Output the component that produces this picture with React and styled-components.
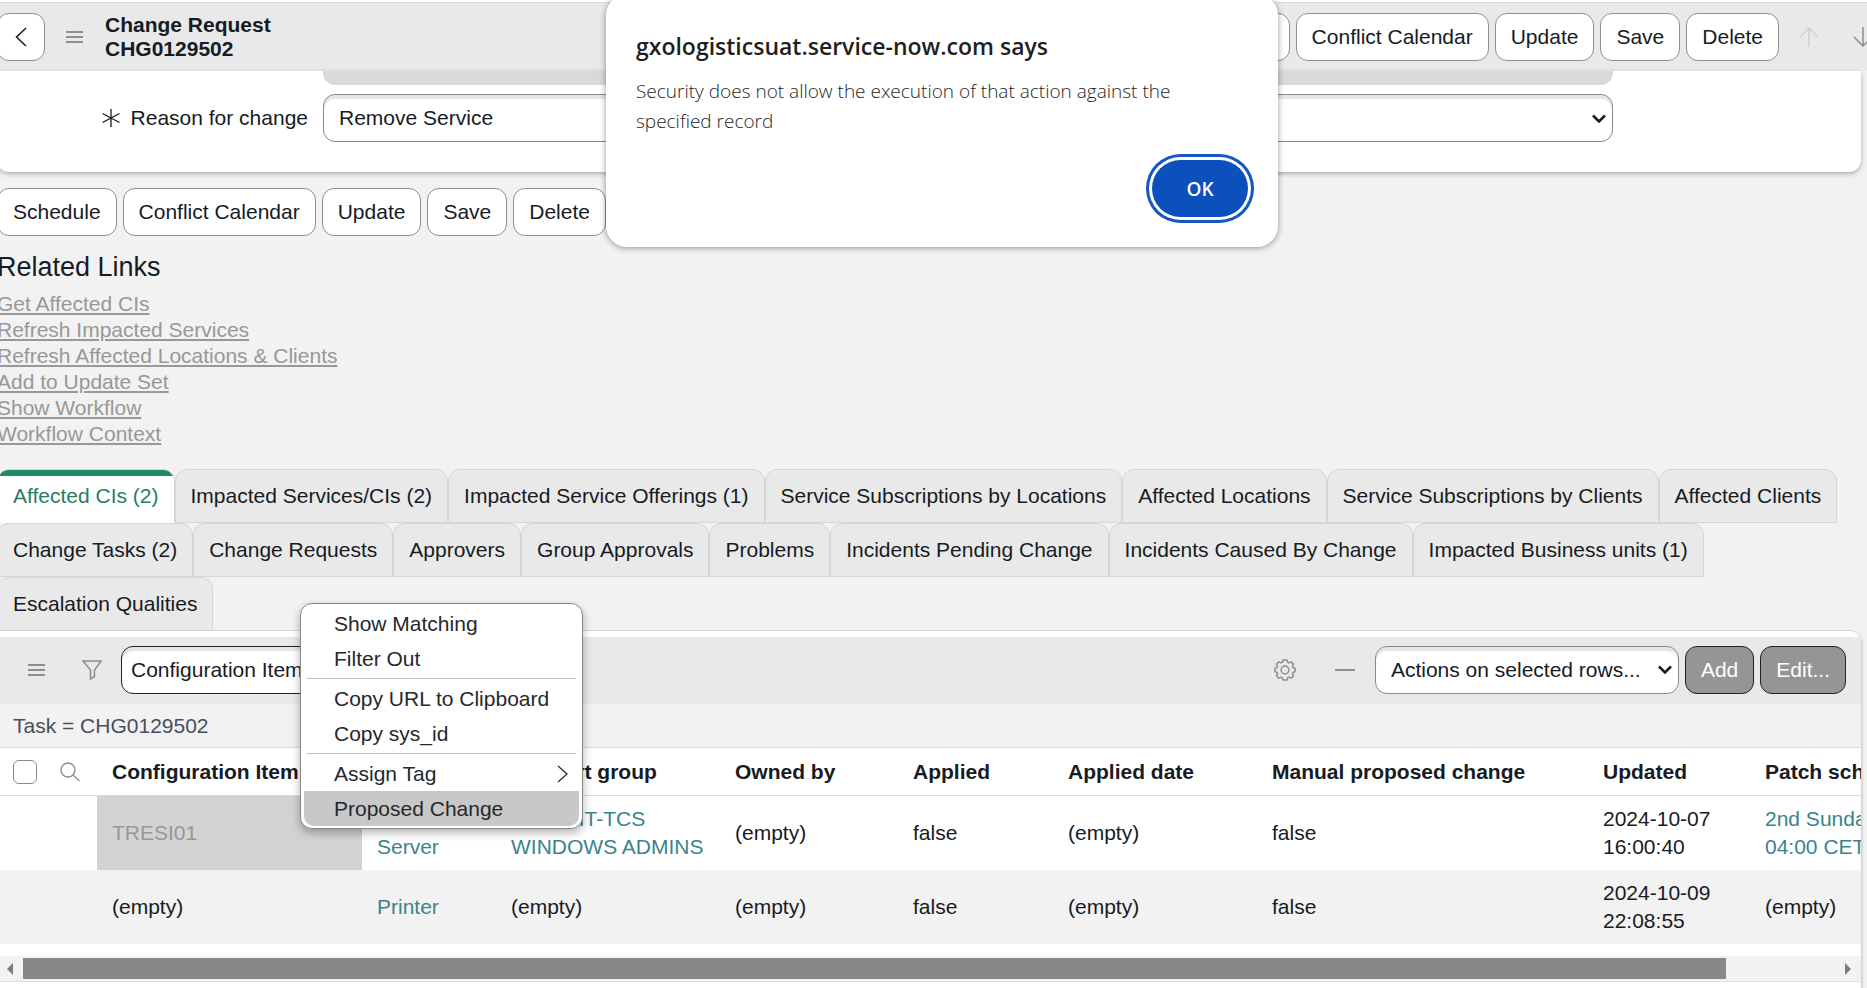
import React from "react";
import styled, { createGlobalStyle, css } from "styled-components";

const GlobalStyle = createGlobalStyle`
  *, *::before, *::after { box-sizing: border-box; }
  html { overflow: hidden; }
  body {
    margin: 0;
    background: #f2f2f2;
    color: #161b24;
    font: 21px/28px "Liberation Sans", Arial, sans-serif;
    overflow: hidden;
  }
  button, select, input { font: inherit; color: inherit; }
`;

const Page = styled.div`
  position: relative;
  margin-left: -3px;
`;

/* ---------- header ---------- */
const Header = styled.header`
  border-top: 2px solid #fff;
  background: #fff;
`;

const HeaderBar = styled.div`
  display: flex;
  align-items: center;
  height: 69px;
  padding-bottom: 10px;
  padding-top: 10px;
  margin-right: -20px;
  border-top: 1px solid #dcdcdc;
  background: #e9e9e9;
`;

const Title = styled.h1`
  margin: 0;
  font-size: 21px;
  line-height: 24px;
  font-weight: bold;
`;

const Actions = styled.div`
  display: flex;
  gap: 6px;
  margin-left: ${(p) => (p.$end ? "auto" : "0")};
`;

const Button = styled.button`
  height: 48px;
  padding: 0 15px;
  border: 1px solid #8c8f94;
  border-radius: 12px;
  background: #fff;
  white-space: nowrap;
  ${(p) =>
    p.$square &&
    css`
      width: 48px;
      padding: 0;
      display: grid;
      place-items: center;
    `}
  ${(p) =>
    p.$dark &&
    css`
      background: #959595;
      border-color: #222;
      color: #fff;
    `}
`;

const IconButton = styled.button`
  display: grid;
  place-items: center;
  width: ${(p) => p.$w || 48}px;
  height: 48px;
  padding: 0;
  border: 0;
  background: none;
  color: ${(p) => (p.$faint ? "#d0d0d0" : "#8e8e8e")};
`;

/* ---------- form ---------- */
const Main = styled.main`
  padding-right: 6px;
`;

const FormCard = styled.section`
  display: grid;
  grid-template-columns: 326px minmax(0, 1fr) 248px;
  row-gap: 9px;
  padding-bottom: 30px;
  border-radius: 0 0 12px 12px;
  background: #fff;
  box-shadow: 0 2px 5px rgba(0, 0, 0, 0.28);
`;

const ReadOnlyEdge = styled.div`
  grid-column: 2;
  height: 14px;
  border-radius: 0 0 12px 12px;
  background: #d9d9d9;
`;

const FieldLabel = styled.label`
  grid-column: 1;
  display: flex;
  align-items: center;
  justify-content: flex-end;
  gap: 11px;
  padding-right: 15px;
`;

const SelectBox = styled.div`
  display: grid;
  align-items: center;
  width: ${(p) => (p.$w ? `${p.$w}px` : "auto")};
  & > * { grid-area: 1 / 1; }
  & > svg { justify-self: end; margin-right: 7px; pointer-events: none; }
`;

const Select = styled.select`
  appearance: none;
  width: 100%;
  height: 48px;
  padding: 0 36px 0 ${(p) => (p.$tight ? 9 : 15)}px;
  border: 1px solid ${(p) => (p.$tight ? "#22222c" : "#868893")};
  border-radius: 12px;
  background: #fff;
  box-shadow: inset 0 4px 1px #e6e6e8;
`;

const ButtonRow = styled.div`
  display: flex;
  gap: 6px;
  margin-top: 16px;
`;

/* ---------- related links ---------- */
const LinksTitle = styled.h2`
  margin: 15px 0 8px;
  font-size: 27px;
  line-height: 32px;
  font-weight: normal;
`;

const LinkList = styled.ul`
  margin: 0;
  padding: 0;
  list-style: none;
  line-height: 26px;
  & a {
    color: #989898;
    text-decoration: underline;
    text-decoration-thickness: 2px;
    text-underline-offset: 2px;
  }
`;

/* ---------- tabs ---------- */
const Tabs = styled.div`
  display: flex;
  flex-wrap: wrap;
  margin-top: 22px;
`;

const Tab = styled.button`
  height: 54px;
  padding: 0 15px;
  border: 1px solid #d3d5d8;
  border-radius: 12px 12px 0 0;
  background: #e9e9e9;
  white-space: nowrap;
  ${(p) =>
    p.$active &&
    css`
      border-bottom-color: #fff;
      background: linear-gradient(#1f8a6b 6px, #fff 6px);
      color: #2a7c62;
    `}
`;

/* ---------- list ---------- */
const ListCard = styled.section`
  padding-top: 6px;
  padding-bottom: 12px;
  border-top: 1px solid #d6d8da;
  border-radius: 0 12px 0 0;
  background: #fff;
  box-shadow: 1px 2px 3px rgba(0, 0, 0, 0.2);
  margin-top: -1px;
`;

const Toolbar = styled.div`
  display: flex;
  align-items: center;
  height: 67px;
  padding: 0 15px 2px;
  background: #e9e9e9;
`;

const Spacer = styled.div`
  flex: 1;
`;

const Breadcrumb = styled.div`
  height: 43px;
  padding: 8px 16px 0;
  background: #f2f2f2;
  color: #46505c;
`;

const TableScroll = styled.div`
  overflow: hidden;
`;

const Table = styled.table`
  table-layout: fixed;
  width: 1930px;
  border-collapse: collapse;
  & th, & td {
    padding: 9px 15px;
    text-align: left;
    vertical-align: middle;
  }
  & th {
    height: 48px;
    border-top: 1px solid #dcdcdc;
    border-bottom: 1px solid #dcdcdc;
    white-space: nowrap;
    line-height: 28px;
  }
  & td { height: 74px; }
  & a { color: #3a848b; text-decoration: none; }
`;

const Row = styled.tr`
  background: ${(p) => (p.$even ? "#f2f2f2" : "#fff")};
`;

const PickedCell = styled.td`
  background: #d3d3d3;
  color: #979797;
`;

const HeadTools = styled.div`
  display: flex;
  align-items: center;
  gap: 23px;
`;

const CheckBox = styled.input`
  appearance: none;
  width: 24px;
  height: 24px;
  margin: 0 0 0 1px;
  border: 1px solid #85888c;
  border-radius: 6px;
  background: #fff;
`;

const SearchToggle = styled.button`
  display: grid;
  place-items: center;
  padding: 0;
  border: 0;
  background: none;
  color: #8e8e8e;
`;

const ScrollBar = styled.div`
  display: flex;
  align-items: center;
  height: 26px;
  margin-top: 12px;
  border-bottom: 1px solid #dfe0e2;
  background: #f2f2f2;
`;

const ScrollArrow = styled.button`
  display: grid;
  place-items: center;
  width: 26px;
  height: 20px;
  padding: 0;
  border: 0;
  background: none;
  color: #7c7c7c;
`;

const ScrollTrack = styled.div`
  flex: 1;
  height: 21px;
`;

const ScrollThumb = styled.div`
  width: 94%;
  height: 100%;
  background: #888;
`;

/* ---------- context menu ---------- */
const Menu = styled.div`
  position: absolute;
  top: 603px;
  left: 303px;
  width: 283px;
  padding: 2px 3px;
  border: 1px solid #85888c;
  border-radius: 12px;
  background: #fff;
  box-shadow: 0 4px 10px rgba(0, 0, 0, 0.3);
`;

const MenuItem = styled.button`
  display: flex;
  align-items: center;
  justify-content: space-between;
  width: 100%;
  height: 35px;
  padding: 0 11px 0 30px;
  border: 0;
  border-radius: ${(p) => (p.$active ? "0 0 10px 10px" : "0")};
  background: ${(p) => (p.$active ? "#c8c8c8" : "none")};
  color: #25282e;
`;

const MenuRule = styled.hr`
  height: 1px;
  margin: 2px 3px;
  border: 0;
  background: #bcbfc2;
`;

/* ---------- dialog ---------- */
const Dialog = styled.div`
  position: absolute;
  top: -6px;
  left: 20px;
  right: 0;
  width: 672px;
  margin: 0 auto;
  padding: 36px 30px 30px;
  border-radius: 21px;
  background: #fff;
  box-shadow: 0 1px 6px rgba(0, 0, 0, 0.4);
  font-family: "Open Sans", "Noto Sans", sans-serif;
  color: #1f1f1f;
`;

const DialogTitle = styled.h2`
  margin: 0;
  font-size: 23px;
  line-height: 32px;
  font-weight: 560;
`;

const DialogText = styled.p`
  margin: 14px 0 24px;
  font-size: 19px;
  line-height: 30px;
  font-weight: 340;
`;

const DialogFooter = styled.div`
  display: flex;
  justify-content: flex-end;
`;

const OkButton = styled.button`
  width: 96px;
  height: 57px;
  border: 0;
  border-radius: 29px;
  background: #0b50bd;
  box-shadow: 0 0 0 3px #fff, 0 0 0 6px #1558bd;
  color: #fff;
  font-size: 19px;
  font-weight: 600;
`;

/* ---------- icons ---------- */
const Svg = ({ w, h, sw = 2, children }) => (
  <svg width={w} height={h} viewBox={`0 0 ${w} ${h}`} fill="none" stroke="currentColor" strokeWidth={sw} aria-hidden="true">
    {children}
  </svg>
);
const BackIcon = () => <Svg w={12} h={20} sw={1.5}><path d="M11 1 1.500 10 11 19" /></Svg>;
const BarsIcon = () => <Svg w={18} h={12} sw={2}><path d="M0 1h17M0 6h17M0 11h17" /></Svg>;
const UpIcon = () => <Svg w={20} h={20} sw={1.500}><path d="M10 20V1M1 10l9-9 9 9" /></Svg>;
const DownIcon = () => <Svg w={20} h={20} sw={1.500}><path d="M10 0v19M1 10l9 9 9-9" /></Svg>;
const ChevronIcon = () => <Svg w={14} h={9} sw={2.500}><path d="M1 1.500 7 7.500 13 1.500" /></Svg>;
const StarIcon = () => <Svg w={18} h={18} sw={1.300}><path d="M9 0v18M0.500 4.500l17 9M0.500 13.500l17-9" /></Svg>;
const FilterIcon = () => <Svg w={20} h={20} sw={1.500}><path d="M1 1h18l-6.500 9v6.500L8.500 19V10z" /></Svg>;
const DashIcon = () => <Svg w={20} h={2} sw={2}><path d="M0 1h20" /></Svg>;
const SearchIcon = () => <Svg w={20} h={20} sw={1.400}><circle cx="8" cy="8" r="7" /><path d="m13 13 6.500 6" /></Svg>;
const NextIcon = () => <Svg w={11} h={18} sw={1.300}><path d="m1 1 9 8-9 8" /></Svg>;
const GearIcon = () => (
  <Svg w={22} h={22} sw={1.500}>
    <path strokeLinejoin="round" d="M9 1h4l.7 2.300 1.300.6L17.200 2.800 19.500 5.300 18.400 7.300 18.900 8.600 21 9.200V12.800L18.900 13.400 18.400 14.700 19.500 16.700 17.200 19.200 15 18.100 13.700 18.700 13 21H9L8.300 18.700 7 18.100 4.800 19.200 2.500 16.700 3.600 14.700 3.100 13.400 1 12.800V9.200L3.100 8.600 3.600 7.300 2.500 5.300 4.800 2.800 7 3.900 8.300 3.300z" />
    <ellipse cx="11" cy="11" rx="3.800" ry="4" />
  </Svg>
);
const Triangle = ({ right }) => (
  <svg width="6" height="12" viewBox="0 0 6 12" fill="currentColor" aria-hidden="true">
    <path d={right ? "M0 0 6 6 0 12z" : "M6 0 0 6 6 12z"} />
  </svg>
);

/* ---------- data ---------- */
const formActions = ["Schedule", "Conflict Calendar", "Update", "Save", "Delete"];
const links = [
  "Get Affected CIs",
  "Refresh Impacted Services",
  "Refresh Affected Locations & Clients",
  "Add to Update Set",
  "Show Workflow",
  "Workflow Context",
];
const tabs = [
  "Affected CIs (2)",
  "Impacted Services/CIs (2)",
  "Impacted Service Offerings (1)",
  "Service Subscriptions by Locations",
  "Affected Locations",
  "Service Subscriptions by Clients",
  "Affected Clients",
  "Change Tasks (2)",
  "Change Requests",
  "Approvers",
  "Group Approvals",
  "Problems",
  "Incidents Pending Change",
  "Incidents Caused By Change",
  "Impacted Business units (1)",
  "Escalation Qualities",
];
const columns = [
  ["Configuration Item", 265],
  ["Class", 134],
  ["Support group", 224],
  ["Owned by", 178],
  ["Applied", 155],
  ["Applied date", 204],
  ["Manual proposed change", 331],
  ["Updated", 162],
  ["Patch schedule", 177],
];

export default function App() {
  return (
    <>
      <GlobalStyle />
      <Page>
        <Header>
          <HeaderBar>
            <Button $square aria-label="Back"><BackIcon /></Button>
            <IconButton $w={60} aria-label="Additional actions"><BarsIcon /></IconButton>
            <Title>Change Request<br />CHG0129502</Title>
            <Actions $end>
              {formActions.map((a) => <Button key={a}>{a}</Button>)}
              <IconButton $faint aria-label="Previous record"><UpIcon /></IconButton>
              <IconButton aria-label="Next record"><DownIcon /></IconButton>
            </Actions>
          </HeaderBar>
        </Header>

        <Main>
          <FormCard>
            <ReadOnlyEdge />
            <FieldLabel htmlFor="reason"><StarIcon />Reason for change</FieldLabel>
            <SelectBox>
              <Select id="reason"><option>Remove Service</option></Select>
              <ChevronIcon />
            </SelectBox>
          </FormCard>

          <ButtonRow>
            {formActions.map((a) => <Button key={a}>{a}</Button>)}
          </ButtonRow>

          <LinksTitle>Related Links</LinksTitle>
          <LinkList>
            {links.map((l) => <li key={l}><a href="#related">{l}</a></li>)}
          </LinkList>

          <Tabs role="tablist">
            {tabs.map((t, i) => (
              <Tab key={t} role="tab" aria-selected={i === 0} $active={i === 0}>{t}</Tab>
            ))}
          </Tabs>

          <ListCard>
            <Toolbar>
              <IconButton $w={50} aria-label="List controls"><BarsIcon /></IconButton>
              <IconButton $w={59} aria-label="Filter"><FilterIcon /></IconButton>
              <SelectBox $w={230}>
                <Select $tight aria-label="Search column"><option>Configuration Item</option></Select>
                <ChevronIcon />
              </SelectBox>
              <Spacer />
              <IconButton $w={60} aria-label="Personalize list"><GearIcon /></IconButton>
              <IconButton $w={60} aria-label="Collapse list"><DashIcon /></IconButton>
              <Actions>
                <SelectBox $w={304}>
                  <Select aria-label="Actions"><option>Actions on selected rows...</option></Select>
                  <ChevronIcon />
                </SelectBox>
                <Button $dark>Add</Button>
                <Button $dark>Edit...</Button>
              </Actions>
            </Toolbar>
            <Breadcrumb>Task = CHG0129502</Breadcrumb>
            <TableScroll>
              <Table>
                <colgroup>
                  <col width="100" />
                  {columns.map(([name, w]) => <col key={name} width={w} />)}
                </colgroup>
                <thead>
                  <tr>
                    <th>
                      <HeadTools>
                        <CheckBox type="checkbox" aria-label="Select all rows" />
                        <SearchToggle aria-label="Search"><SearchIcon /></SearchToggle>
                      </HeadTools>
                    </th>
                    {columns.map(([name]) => <th key={name} scope="col">{name}</th>)}
                  </tr>
                </thead>
                <tbody>
                  <Row>
                    <td />
                    <PickedCell>TRESI01</PickedCell>
                    <td><a href="#class">Windows Server</a></td>
                    <td><a href="#group">AMER-IT-TCS WINDOWS ADMINS</a></td>
                    <td>(empty)</td>
                    <td>false</td>
                    <td>(empty)</td>
                    <td>false</td>
                    <td>2024-10-07 16:00:40</td>
                    <td><a href="#patch">2nd Sunday 04:00 CET</a></td>
                  </Row>
                  <Row $even>
                    <td />
                    <td>(empty)</td>
                    <td><a href="#class">Printer</a></td>
                    <td>(empty)</td>
                    <td>(empty)</td>
                    <td>false</td>
                    <td>(empty)</td>
                    <td>false</td>
                    <td>2024-10-09 22:08:55</td>
                    <td>(empty)</td>
                  </Row>
                </tbody>
              </Table>
            </TableScroll>
            <ScrollBar>
              <ScrollArrow aria-label="Scroll left"><Triangle /></ScrollArrow>
              <ScrollTrack><ScrollThumb /></ScrollTrack>
              <ScrollArrow aria-label="Scroll right"><Triangle right /></ScrollArrow>
            </ScrollBar>
          </ListCard>
        </Main>

        <Menu role="menu">
          <MenuItem role="menuitem">Show Matching</MenuItem>
          <MenuItem role="menuitem">Filter Out</MenuItem>
          <MenuRule />
          <MenuItem role="menuitem">Copy URL to Clipboard</MenuItem>
          <MenuItem role="menuitem">Copy sys_id</MenuItem>
          <MenuRule />
          <MenuItem role="menuitem">Assign Tag<NextIcon /></MenuItem>
          <MenuItem role="menuitem" $active>Proposed Change</MenuItem>
        </Menu>

        <Dialog role="alertdialog" aria-labelledby="dialog-title" aria-describedby="dialog-text">
          <DialogTitle id="dialog-title">gxologisticsuat.service-now.com says</DialogTitle>
          <DialogText id="dialog-text">
            Security does not allow the execution of that action against the specified record
          </DialogText>
          <DialogFooter><OkButton>OK</OkButton></DialogFooter>
        </Dialog>
      </Page>
    </>
  );
}
